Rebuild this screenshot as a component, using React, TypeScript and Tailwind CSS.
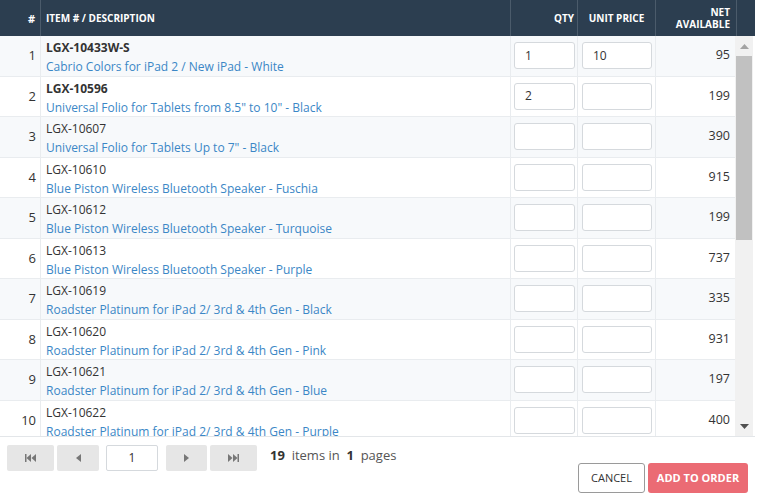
import React from "react";

const rows = [
  { sku: "LGX-10433W-S", desc: "Cabrio Colors for iPad 2 / New iPad - White", qty: "1", price: "10", net: 95, bold: true },
  { sku: "LGX-10596", desc: 'Universal Folio for Tablets from 8.5" to 10" - Black', qty: "2", price: "", net: 199, bold: true },
  { sku: "LGX-10607", desc: 'Universal Folio for Tablets Up to 7" - Black', qty: "", price: "", net: 390 },
  { sku: "LGX-10610", desc: "Blue Piston Wireless Bluetooth Speaker - Fuschia", qty: "", price: "", net: 915 },
  { sku: "LGX-10612", desc: "Blue Piston Wireless Bluetooth Speaker - Turquoise", qty: "", price: "", net: 199 },
  { sku: "LGX-10613", desc: "Blue Piston Wireless Bluetooth Speaker - Purple", qty: "", price: "", net: 737 },
  { sku: "LGX-10619", desc: "Roadster Platinum for iPad 2/ 3rd & 4th Gen - Black", qty: "", price: "", net: 335 },
  { sku: "LGX-10620", desc: "Roadster Platinum for iPad 2/ 3rd & 4th Gen - Pink", qty: "", price: "", net: 931 },
  { sku: "LGX-10621", desc: "Roadster Platinum for iPad 2/ 3rd & 4th Gen - Blue", qty: "", price: "", net: 197 },
  { sku: "LGX-10622", desc: "Roadster Platinum for iPad 2/ 3rd & 4th Gen - Purple", qty: "", price: "", net: 400 },
];

const font = { fontFamily: '"Open Sans", "Noto Sans", sans-serif' };

function PagerBtn({ children, w }: { children: React.ReactNode; w: string }) {
  return (
    <div className={`${w} h-[26px] bg-[#e6e6e6] rounded-[2px] flex items-center justify-center`}>{children}</div>
  );
}

const Tri = ({ dir }: { dir: "l" | "r" }) => (
  <svg width="5" height="8" viewBox="0 0 5 8">
    {dir === "l" ? <path d="M5 0 L0 4 L5 8 Z" fill="#777" /> : <path d="M0 0 L5 4 L0 8 Z" fill="#777" />}
  </svg>
);

const End = ({ dir }: { dir: "l" | "r" }) => (
  <svg width="11" height="8" viewBox="0 0 11 8">
    {dir === "l" ? (
      <g fill="#777">
        <rect x="0" y="0" width="1.5" height="8" />
        <path d="M6 0 L1.5 4 L6 8 Z" />
        <path d="M11 0 L6.5 4 L11 8 Z" />
      </g>
    ) : (
      <g fill="#777">
        <path d="M0 0 L4.5 4 L0 8 Z" />
        <path d="M5 0 L9.5 4 L5 8 Z" />
        <rect x="9.5" y="0" width="1.5" height="8" />
      </g>
    )}
  </svg>
);

export default function App() {
  return (
    <div className="w-[758px] h-[494px] bg-white text-[12px] text-[#333] relative overflow-hidden" style={font}>
      <div className="w-[755px]">
        {/* Header */}
        <div className="flex h-[36px] bg-[#2c3e50] text-white font-bold text-[10px] leading-[13px]">
          <div className="w-[41px] border-r border-[#4b5b6b] flex items-center justify-end pr-[5px] text-[11px]">#</div>
          <div className="w-[470px] border-r border-[#4b5b6b] flex items-center pl-[5px]">ITEM # / DESCRIPTION</div>
          <div className="w-[67px] border-r border-[#4b5b6b] flex items-center justify-end pr-[3px]">QTY</div>
          <div className="w-[78px] border-r border-[#4b5b6b] flex items-center justify-center">UNIT PRICE</div>
          <div className="w-[81px] border-r border-[#4b5b6b] flex flex-col justify-center items-end text-right pr-[6px] leading-[12px]">
            <span>NET</span>
            <span>AVAILABLE</span>
          </div>
          <div className="flex-1" />
        </div>
        {/* Body */}
        <div className="flex h-[401px] overflow-hidden border-b border-[#e3e6e9]">
          <div className="w-[735px]">
            {rows.map((r, i) => (
              <div
                key={i}
                className={`flex h-[40.5px] border-b border-[#e9ecef] ${i % 2 === 0 ? "bg-[#f7f9fb]" : "bg-white"}`}
              >
                <div className="w-[41px] border-r border-[#e9ecef] flex items-center justify-end pr-[4px] text-[13px]">{i + 1}</div>
                <div className="w-[470px] border-r border-[#e9ecef] pl-[5px] pt-[2px] leading-[19px]">
                  <div className={r.bold ? "font-bold" : ""}>{r.sku}</div>
                  <div className="text-[#3b87c6]">{r.desc}</div>
                </div>
                <div className="w-[67px] border-r border-[#e9ecef] flex items-center pl-[3px]">
                  <div className="w-[61px] h-[27px] bg-white border border-[#d5d9dd] rounded-[3px] flex items-center pl-[10px]">{r.qty}</div>
                </div>
                <div className="w-[78px] border-r border-[#e9ecef] flex items-center pl-[4px]">
                  <div className="w-[70px] h-[27px] bg-white border border-[#d5d9dd] rounded-[3px] flex items-center pl-[10px]">{r.price}</div>
                </div>
                <div className="w-[79px] flex items-center justify-end pr-[5px] text-[12.5px]">{r.net}</div>
              </div>
            ))}
          </div>
          {/* Scrollbar */}
          <div className="w-[18px] bg-[#f1f1f1] flex flex-col items-center">
            <div className="h-[20px] flex items-center justify-center">
              <svg width="9" height="5" viewBox="0 0 9 5"><path d="M0 5 L4.5 0 L9 5 Z" fill="#a3a3a3" /></svg>
            </div>
            <div className="w-[16px] h-[184px] bg-[#c1c1c1]" />
            <div className="flex-1" />
            <div className="h-[20px] flex items-center justify-center">
              <svg width="9" height="5" viewBox="0 0 9 5"><path d="M0 0 L4.5 5 L9 0 Z" fill="#505050" /></svg>
            </div>
          </div>
        </div>
        {/* Pager */}
        <div className="flex items-center h-[40px] pl-[7px] pt-[1px]">
          <PagerBtn w="w-[47px]"><End dir="l" /></PagerBtn>
          <div className="w-[3px]" />
          <PagerBtn w="w-[42px]"><Tri dir="l" /></PagerBtn>
          <div className="w-[7px]" />
          <div className="w-[52px] h-[26px] bg-white border border-[#d5d9dd] rounded-[2px] flex items-center justify-center text-[12px]">1</div>
          <div className="w-[8px]" />
          <PagerBtn w="w-[41px]"><Tri dir="r" /></PagerBtn>
          <div className="w-[3px]" />
          <PagerBtn w="w-[47px]"><End dir="r" /></PagerBtn>
          <div className="ml-[13px] text-[13px] text-[#555] pb-[3px]">
            <span className="font-bold text-[#333]">19</span>&nbsp; items in &nbsp;<span className="font-bold text-[#333]">1</span>&nbsp; pages
          </div>
        </div>
        {/* Actions */}
        <div className="flex justify-end pr-[7px] gap-[3px] -mt-[14px]">
          <div className="w-[67px] h-[30px] border border-[#9a9a9a] rounded-[3px] bg-white flex items-center justify-center text-[11px] text-[#333]">CANCEL</div>
          <div className="w-[100px] h-[30px] rounded-[3px] bg-[#eb6b74] flex items-center justify-center text-[11px] font-bold text-white">ADD TO ORDER</div>
        </div>
      </div>
    </div>
  );
}
